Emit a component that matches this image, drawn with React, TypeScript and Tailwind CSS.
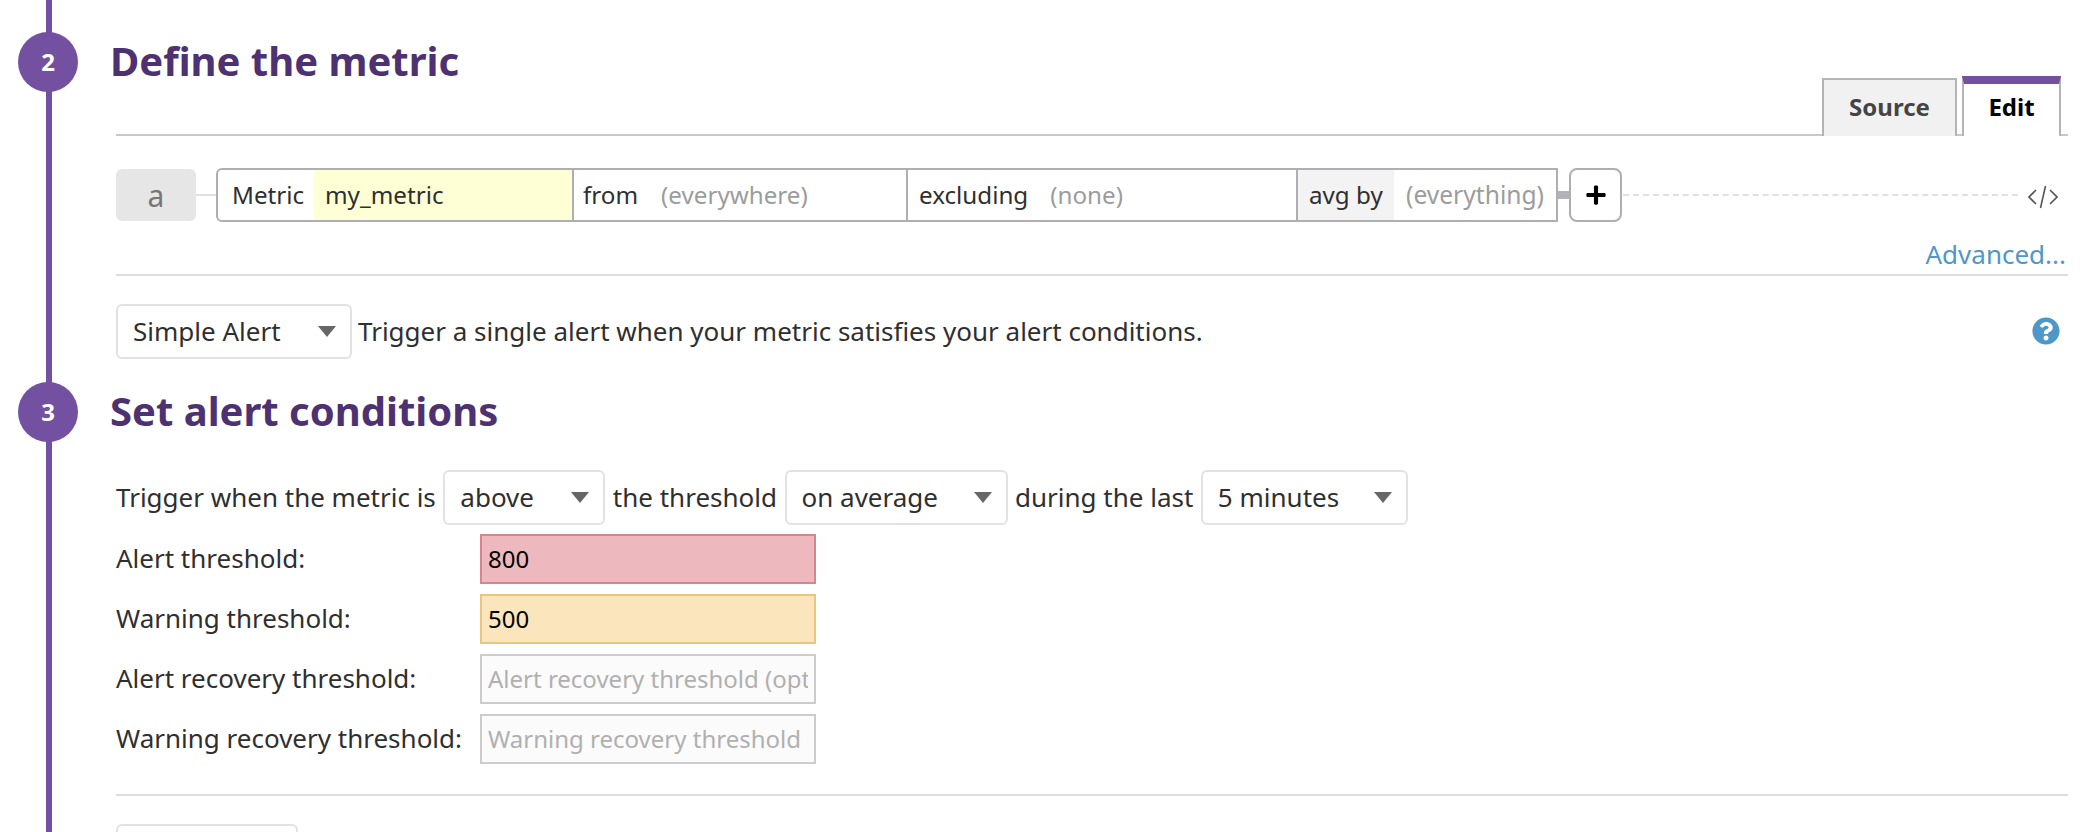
import { FaPlus, FaQuestionCircle } from "react-icons/fa";

const font = { fontFamily: '"Noto Sans", sans-serif' };

function Step({ n, title }: { n: number; title: string }) {
    return (
        <div className="flex items-center h-[60px] pl-[18px]">
            <div className="w-[60px] h-[60px] rounded-full bg-[#7350a0] text-white font-bold text-[24px] flex items-center justify-center shrink-0">
                {n}
            </div>
            <h2 className="ml-[32px] -mt-[2px] text-[40px] leading-none font-bold text-[#4d3170] whitespace-nowrap">{title}</h2>
        </div>
    );
}

function Dropdown({ label, width }: { label: string; width: string }) {
    return (
        <div className={`${width} h-[55px] shrink-0 flex items-center justify-between bg-white border-2 border-[#e2e2e6] rounded-[6px] pl-[15px] pr-[14px]`}>
            <span>{label}</span>
            <span className="w-0 h-0 border-x-[9px] border-x-transparent border-t-[11px] border-t-[#666666]" />
        </div>
    );
}

function Threshold({ label, value, placeholder, tone }: { label: string; value?: string; placeholder?: string; tone: string }) {
    return (
        <div className="flex items-center h-[50px]">
            <label className="w-[364px] shrink-0 pb-[2px]">{label}</label>
            <input
                readOnly
                value={value}
                placeholder={placeholder}
                className={`w-[336px] h-[50px] border-2 px-[6px] pb-[1px] text-[24px] text-black outline-none placeholder:text-[#b0b0b0] ${tone}`}
            />
        </div>
    );
}

export default function App() {
    return (
        <div style={font} className="relative w-[2098px] h-[832px] overflow-hidden bg-white text-[26px] text-[#2f2f2f]">
            <div className="absolute left-[46px] top-0 bottom-0 w-[6px] bg-[#7350a0]" />

            <div className="relative pt-[32px]">
                <Step n={2} title="Define the metric" />

                <div className="ml-[116px] mr-[30px]">
                    <div className="-mt-[16px] h-[60px] flex items-end justify-end gap-[5px] pr-[7px] border-b-2 border-[#c8c8ca]">
                        <div className="w-[135px] h-[58px] -mb-[2px] pb-[3px] flex items-center justify-center bg-[#f1f1f1] border-2 border-b-0 border-[#b4b4b6] font-bold text-[24px] text-[#444444]">
                            Source
                        </div>
                        <div className="w-[99px] h-[60px] -mb-[2px] pb-[6px] flex items-center justify-center bg-white border-2 border-y-0 border-[#b4b4b6] border-t-[8px] border-t-[#7350a0] font-bold text-[24px] text-black">
                            Edit
                        </div>
                    </div>

                    <div className="flex items-center mt-[32px] h-[54px] text-[24.2px]">
                        <div className="w-[80px] h-[52px] rounded-[6px] bg-[#e6e6e6] text-[#777777] text-[30px] flex items-center justify-center shrink-0">
                            a
                        </div>
                        <div className="w-[20px] h-[2px] bg-[#e0e0e0] shrink-0" />
                        <div className="w-[1342px] h-[54px] flex border-2 border-[#b0aeb2] rounded-l-[6px] shrink-0">
                            <div className="w-[96px] pl-[14px] flex items-center shrink-0">Metric</div>
                            <div className="w-[258px] pl-[11px] flex items-center bg-[#ffffd6] shrink-0">my_metric</div>
                            <div className="w-[334px] pl-[9px] flex items-center gap-[23px] border-l-2 border-[#b0aeb2] shrink-0">
                                <span>from</span>
                                <span className="text-[#9c9c9c]">(everywhere)</span>
                            </div>
                            <div className="w-[390px] pl-[11px] flex items-center gap-[22px] border-l-2 border-[#b0aeb2] shrink-0">
                                <span>excluding</span>
                                <span className="text-[#9c9c9c]">(none)</span>
                            </div>
                            <div className="w-[98px] pl-[11px] flex items-center bg-[#f3f3f3] border-l-2 border-[#b0aeb2] shrink-0">avg by</div>
                            <div className="flex-1 pl-[12px] flex items-center text-[24.6px] text-[#9c9c9c] whitespace-nowrap">(everything)</div>
                        </div>
                        <div className="w-[11px] h-[8px] bg-[#b4b2b6] shrink-0" />
                        <div className="w-[53px] h-[54px] flex items-center justify-center border-2 border-[#b0aeb2] rounded-[8px] shrink-0">
                            <FaPlus className="text-[22px] text-black" />
                        </div>
                        <div className="flex-1 border-t-2 border-dashed border-[#e0e0e0] ml-[1px]" />
                        <svg className="w-[30px] h-[24px] ml-[10px] mr-[10px] mt-[4px] shrink-0" viewBox="0 0 30 24" fill="none" stroke="#555555" strokeWidth="1.6">
                            <path d="M8 5 L1 12 L8 19" />
                            <path d="M22 5 L29 12 L22 19" />
                            <path d="M17.5 1 L12.5 23" />
                        </svg>
                    </div>

                    <div className="h-[52px] pt-[12px] pr-[2px] flex items-center justify-end text-[#4f97c8]">Advanced...</div>
                    <div className="h-[2px] bg-[#dedede]" />

                    <div className="flex items-center mt-[28px] h-[55px]">
                        <Dropdown label="Simple Alert" width="w-[236px]" />
                        <span className="ml-[6px]">Trigger a single alert when your metric satisfies your alert conditions.</span>
                        <FaQuestionCircle className="ml-auto mr-[8px] -mt-[2px] text-[28px] text-[#4f97c8]" />
                    </div>
                </div>

                <div className="mt-[23px]">
                    <Step n={3} title="Set alert conditions" />
                </div>

                <div className="ml-[116px] mr-[30px]">
                    <div className="flex items-center mt-[28px] h-[55px] gap-[7.5px] whitespace-nowrap">
                        <span>Trigger when the metric is</span>
                        <Dropdown label="above" width="w-[162px]" />
                        <span>the threshold</span>
                        <Dropdown label="on average" width="w-[223px]" />
                        <span>during the last</span>
                        <Dropdown label="5 minutes" width="w-[207px]" />
                    </div>

                    <div className="flex flex-col gap-[10px] mt-[9px]">
                        <Threshold label="Alert threshold:" value="800" tone="bg-[#eeb8bf] border-[#d5858e]" />
                        <Threshold label="Warning threshold:" value="500" tone="bg-[#fbe5bd] border-[#e9c57f]" />
                        <Threshold label="Alert recovery threshold:" placeholder="Alert recovery threshold (optional)" tone="bg-[#fbfbfb] border-[#cdcdcd]" />
                        <Threshold label="Warning recovery threshold:" placeholder="Warning recovery threshold (optional)" tone="bg-[#fbfbfb] border-[#cdcdcd]" />
                    </div>

                    <div className="h-[2px] bg-[#dedede] mt-[30px]" />
                    <div className="w-[182px] h-[55px] mt-[28px] bg-white border-2 border-[#e2e2e6] rounded-[6px]" />
                </div>
            </div>
        </div>
    );
}
